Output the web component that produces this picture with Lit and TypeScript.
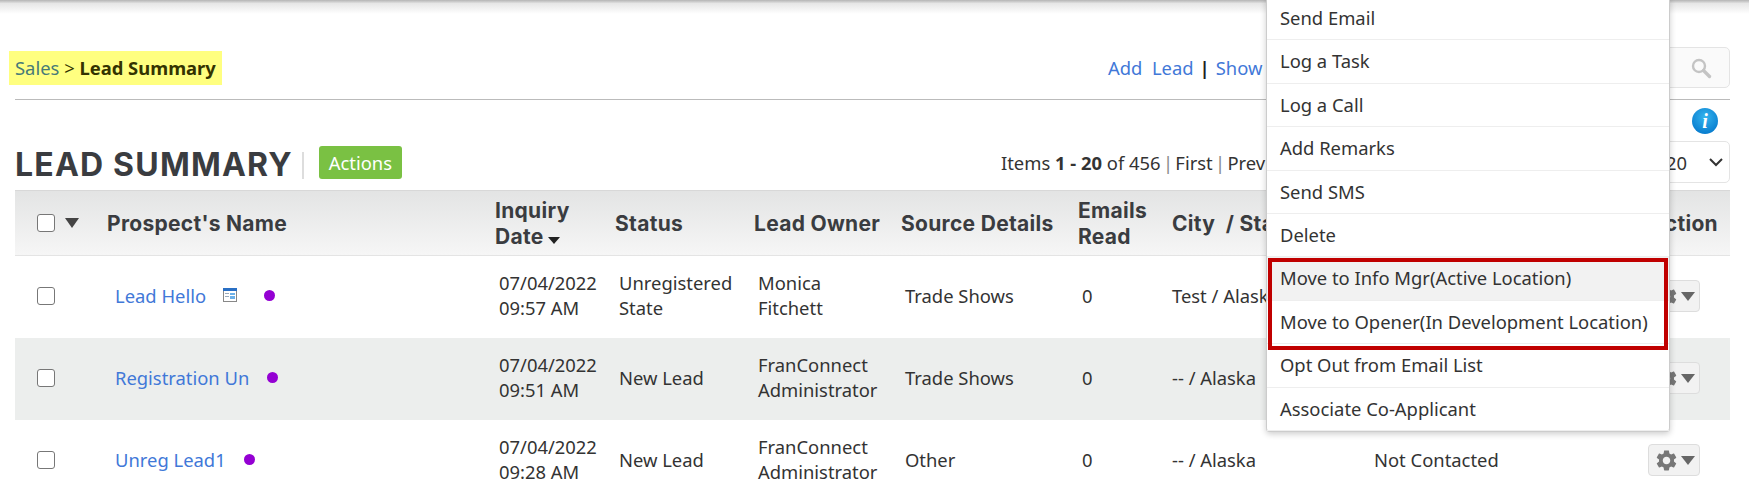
import { LitElement, html, css, svg } from "lit";
import { customElement } from "lit/decorators.js";

const gear = svg`<path d="M19.14 12.94c.04-.3.06-.61.06-.94 0-.32-.02-.64-.07-.94l2.03-1.58c.18-.14.23-.41.12-.61l-1.92-3.32c-.12-.22-.37-.29-.59-.22l-2.39.96c-.5-.38-1.03-.7-1.62-.94l-.36-2.54c-.04-.24-.24-.41-.48-.41h-3.84c-.24 0-.43.17-.47.41l-.36 2.54c-.59.24-1.13.57-1.62.94l-2.39-.96c-.22-.08-.47 0-.59.22L2.74 8.87c-.12.21-.08.47.12.61l2.03 1.58c-.05.3-.09.63-.09.94s.02.64.07.94l-2.03 1.58c-.18.14-.23.41-.12.61l1.92 3.32c.12.22.37.29.59.22l2.39-.96c.5.38 1.03.7 1.62.94l.36 2.54c.05.24.24.41.48.41h3.84c.24 0 .44-.17.47-.41l.36-2.54c.59-.24 1.13-.56 1.62-.94l2.39.96c.22.08.47 0 .59-.22l1.92-3.32c.12-.22.07-.47-.12-.61l-2.01-1.58zM12 15.6c-1.98 0-3.6-1.62-3.6-3.6s1.62-3.6 3.6-3.6 3.6 1.62 3.6 3.6-1.62 3.6-3.6 3.6z"/>`;

interface Row {
  name: string;
  doc?: boolean;
  date: string;
  time: string;
  status: string[];
  owner: string[];
  source: string;
  city: string;
  contact: string;
}

const rows: Row[] = [
  { name: "Lead Hello", doc: true, date: "07/04/2022", time: "09:57 AM", status: ["Unregistered", "State"], owner: ["Monica", "Fitchett"], source: "Trade Shows", city: "Test / Alaska", contact: "" },
  { name: "Registration Un", date: "07/04/2022", time: "09:51 AM", status: ["New Lead"], owner: ["FranConnect", "Administrator"], source: "Trade Shows", city: "-- / Alaska", contact: "" },
  { name: "Unreg Lead1", date: "07/04/2022", time: "09:28 AM", status: ["New Lead"], owner: ["FranConnect", "Administrator"], source: "Other", city: "-- / Alaska", contact: "Not Contacted" },
];

const menu = ["Send Email", "Log a Task", "Log a Call", "Add Remarks", "Send SMS", "Delete", "Move to Info Mgr(Active Location)", "Move to Opener(In Development Location)", "Opt Out from Email List", "Associate Co-Applicant"];

@customElement("app-root")
export class AppRoot extends LitElement {
  static styles = css`
    :host {
      display: block;
      position: relative;
      height: 489px;
      overflow: hidden;
      background: #fff;
      color: #333;
      font-family: "Noto Sans", Lato, sans-serif;
      font-size: 18.4px;
    }
    .shade { height: 14px; background: linear-gradient(#b4b4b4, #e6e6e6 25%, #fff); }
    .page { padding: 0 19px 0 15px; }
    .crumbs {
      display: grid;
      grid-template-columns: 1093px 1fr auto;
      align-items: center;
      height: 86px;
      padding-top: 33px;
      padding-bottom: 12px;
      box-sizing: border-box;
      border-bottom: 1px solid #bbb;
    }
    .crumb { justify-self: start; margin-left: -6px; padding: 0 6px; height: 34px; line-height: 34px; background: #ffff80; color: #333300; }
    .crumb a { color: #477a78; }
    .crumb b { font-weight: 700; }
    .links { display: flex; gap: 6px; color: #4178d8; white-space: nowrap; }
    .links i { font-style: normal; color: #222; font-weight: 700; }
    .search { width: 300px; height: 41px; box-sizing: border-box; border: 1px solid #e4e4e4; border-radius: 5px; background: #fafafa; display: flex; align-items: center; justify-content: flex-end; padding-right: 17px; }
    .info-row { display: flex; justify-content: flex-end; padding: 8px 12px 6px 0; height: 26px; }
    .info {
      width: 26px; height: 26px; border-radius: 50%;
      background: radial-gradient(circle at 50% 35%, #35b4ee, #0a7fd0 75%);
      color: #fff; font: italic 700 20px/26px "Liberation Serif", serif; text-align: center;
    }
    .tools { display: grid; grid-template-columns: 986px 1fr auto; align-items: center; height: 50px; }
    .tl { display: flex; align-items: center; }
    h1 { margin: 0; font: 700 32px/38px Inter, sans-serif; color: #3a3c40; letter-spacing: 1.2px; }
    .sep { width: 2px; height: 27px; background: #ddd; margin: 0 15px 0 9px; }
    .actions { background: #7ac143; color: #fff; height: 33px; width: 83px; line-height: 33px; text-align: center; border-radius: 3px; margin-top: -6px; }
    .pager { white-space: nowrap; margin-top: -6px; }
    .pager b { font-weight: 700; }
    .pager i { font-style: normal; color: #888; margin: 0 -2.5px; }
    .select { width: 120px; height: 42px; box-sizing: border-box; margin-top: -6px; border: 1px solid #e4e4e4; border-radius: 5px; display: flex; align-items: center; justify-content: flex-end; padding-right: 6px; gap: 22px; }
    .row, .head { display: grid; grid-template-columns: 92px 388px 120px 139px 147px 177px 94px 202px 276px 80px; align-items: center; }
    .head {
      height: 66px; box-sizing: border-box; padding-top: 2px;
      background: linear-gradient(#e3e4e4, #f6f6f6);
      border-top: 1px solid #d8d8d8; border-bottom: 1px solid #e4e4e4;
      font: 700 21px/26px Inter, sans-serif; color: #3a3c40; letter-spacing: 0.3px;
    }
    .head .right { justify-self: end; padding-right: 12px; }
    .row { height: 82px; box-sizing: border-box; padding-bottom: 2px; line-height: 25px; }
    .row.alt { background: #eceeed; }
    .cell { padding-left: 4px; margin-top: -2px; }
    .cell.flat { padding-left: 0; white-space: nowrap; }
    .check-h { display: flex; align-items: center; padding-left: 22px; gap: 10px; margin-top: -2px; }
    .box { width: 18px; height: 18px; box-sizing: border-box; border: 1.5px solid #777; border-radius: 3px; background: #fff; flex: none; }
    .tri { width: 0; height: 0; border-left: 7px solid transparent; border-right: 7px solid transparent; border-top: 10px solid #444; }
    .tri.small { display: inline-block; border-left-width: 6.5px; border-right-width: 6.5px; border-top: 7px solid #222; margin-left: 4px; }
    .name { display: flex; align-items: center; padding-left: 8px; margin-top: -2px; color: #4178d8; white-space: nowrap; }
    .row .check { padding-left: 22px; }
    .dot { width: 11px; height: 11px; border-radius: 50%; background: #9400d3; margin-left: 18px; }
    .doc { margin-left: 17px; }
    .doc + .dot { margin-left: 27px; }
    .act { justify-self: end; padding-right: 30px; }
    .gear { width: 52px; height: 32px; box-sizing: border-box; border: 1px solid #ddd; border-radius: 4px; background: #f2f2f2; display: flex; align-items: center; justify-content: center; gap: 2px; }
    .gear .tri { border-left-width: 7px; border-right-width: 7px; border-top: 9px solid #666; }
    .menu {
      position: absolute; left: 1266px; top: -3px; width: 404px; box-sizing: border-box;
      background: #fff; border: 1px solid #ccc; border-top: 0; border-radius: 0 0 4px 4px;
      box-shadow: 0 2px 6px rgba(0,0,0,.2);
    }
    .item { height: 43.4px; box-sizing: border-box; padding-left: 13px; line-height: 42px; border-bottom: 1px solid #eee; white-space: nowrap; color: #333; }
    .item:last-of-type { border-bottom: 0; }
    .item.hot { background: #f2f2f2; }
    .red { position: absolute; left: 1px; top: 261px; width: 400px; height: 92px; box-sizing: border-box; border: 4px solid #c00000; }
  `;

  render() {
    return html`
      <div class="shade"></div>
      <div class="page">
        <div class="crumbs">
          <div class="crumb"><a>Sales</a> &gt; <b>Lead Summary</b></div>
          <div class="links"><span>Add&nbsp; Lead</span><i>|</i><span>Show</span></div>
          <div class="search">
            <svg width="22" height="22" viewBox="0 0 22 22" fill="none" stroke="#c4c4c4"><circle cx="9" cy="9" r="6" stroke-width="2.4"/><path d="M13.5 13.5l6 6" stroke-width="3.4" stroke-linecap="round"/></svg>
          </div>
        </div>
        <div class="info-row"><div class="info">i</div></div>
        <div class="tools">
          <div class="tl"><h1>LEAD SUMMARY</h1><div class="sep"></div><div class="actions">Actions</div></div>
          <div class="pager">Items <b>1 - 20</b> of 456 <i>|</i> First <i>|</i> Prev</div>
          <div class="select"><span>20</span>
            <svg width="14" height="9" viewBox="0 0 14 9" fill="none" stroke="#333" stroke-width="2"><path d="M1 1l6 6 6-6"/></svg>
          </div>
        </div>
        <div class="head">
          <div class="check-h"><span class="box"></span><span class="tri"></span></div>
          <div>Prospect's Name</div>
          <div>Inquiry<br />Date<span class="tri small"></span></div>
          <div>Status</div>
          <div>Lead Owner</div>
          <div>Source Details</div>
          <div>Emails<br />Read</div>
          <div>City &nbsp;/ State</div>
          <div></div>
          <div class="right">Action</div>
        </div>
        ${rows.map((r, i) => html`
          <div class="row ${i === 1 ? "alt" : ""}">
            <div class="check"><div class="box"></div></div>
            <div class="name">${r.name}
              ${r.doc ? html`<svg class="doc" width="14" height="14" viewBox="0 0 14 14"><rect x=".5" y=".5" width="13" height="13" fill="#fff" stroke="#888"/><rect width="14" height="3" fill="#2a6fc4"/><rect x="2" y="5" width="4" height="1" fill="#9ab"/><rect x="7" y="5" width="5" height="2" fill="#6cb0e8"/><rect x="2" y="8" width="4" height="1" fill="#9ab"/><rect x="7" y="8" width="5" height="3" fill="#6cb0e8"/></svg>` : ""}
              <span class="dot"></span></div>
            <div class="cell">${r.date}<br />${r.time}</div>
            <div class="cell">${r.status.map((s, j) => html`${j ? html`<br />` : ""}${s}`)}</div>
            <div class="cell">${r.owner.map((s, j) => html`${j ? html`<br />` : ""}${s}`)}</div>
            <div class="cell">${r.source}</div>
            <div class="cell">0</div>
            <div class="cell flat">${r.city}</div>
            <div class="cell flat">${r.contact}</div>
            <div class="act"><div class="gear"><svg width="25" height="25" viewBox="0 0 24 24" fill="#777">${gear}</svg><span class="tri"></span></div></div>
          </div>`)}
      </div>
      <div class="menu">
        ${menu.map((m, i) => html`<div class="item ${i === 6 ? "hot" : ""}">${m}</div>`)}
        <div class="red"></div>
      </div>
    `;
  }
}
